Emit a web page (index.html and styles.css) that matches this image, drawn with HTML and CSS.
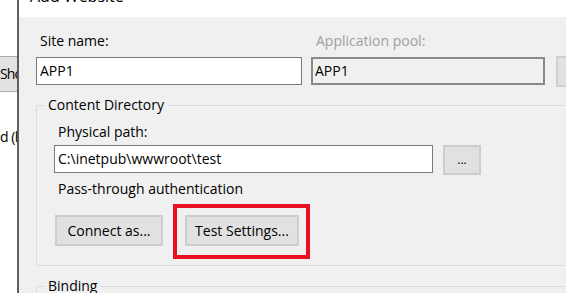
FILE: index.html
```html
<!DOCTYPE html>
<html lang="en">
<head>
<meta charset="utf-8">
<title>Add Website</title>
<link rel="stylesheet" href="styles.css">
</head>
<body>
<div class="screen">
  <div class="behind">
    <div class="behind-btn">Show</div>
    <div class="behind-text">d (http)</div>
  </div>
  <div class="dialog">
    <div class="titlebar"><span class="title">Add Website</span></div>
    <div class="body">
      <div class="top-row">
        <div class="field">
          <label class="label">Site name:</label>
          <div class="input">APP1</div>
        </div>
        <div class="field">
          <label class="label disabled">Application pool:</label>
          <div class="input readonly">APP1</div>
        </div>
        <div class="field">
          <span class="label">&nbsp;</span>
          <div class="btn side-btn">Select...</div>
        </div>
      </div>

      <fieldset class="group">
        <legend>Content Directory</legend>
        <div class="label inner-label">Physical path:</div>
        <div class="path-row">
          <div class="input path">C:\inetpub\wwwroot\test</div>
          <div class="btn browse">...</div>
        </div>
        <div class="label pass">Pass-through authentication</div>
        <div class="btn-row">
          <div class="btn connect">Connect as...</div>
          <div class="highlight">
            <div class="btn test">Test Settings...</div>
          </div>
        </div>
      </fieldset>

      <fieldset class="group binding">
        <legend>Binding</legend>
        <div class="spacer"></div>
      </fieldset>
    </div>
  </div>
</div>
</body>
</html>
```
FILE: styles.css
```css
* { box-sizing: border-box; }
html, body {
  margin: 0;
  padding: 0;
  width: 566px;
  height: 293px;
  overflow: hidden;
  background: #ffffff;
}
body {
  font-family: "Open Sans", "Noto Sans", sans-serif;
  font-size: 14px;
  line-height: 18px;
  color: #000000;
}
.screen {
  display: flex;
  align-items: flex-start;
  width: 640px;
  height: 293px;
  overflow: hidden;
}
.behind {
  width: 17px;
  flex: 0 0 17px;
  height: 293px;
  overflow: hidden;
  background: #ffffff;
  padding-top: 56px;
}
.behind-btn {
  width: 60px;
  height: 36px;
  margin-left: -18px;
  background: #e1e1e1;
  border: 1px solid #adadad;
  padding-left: 17px;
  line-height: 34px;
  white-space: nowrap;
  letter-spacing: -0.9px;
}
.behind-text {
  margin-top: 36px;
  white-space: nowrap;
  letter-spacing: -0.5px;
}
.dialog {
  flex: 0 0 auto;
  width: 620px;
  height: 293px;
  border-left: 2px solid #5f5f5f;
  background: #f0f0f0;
  display: flex;
  flex-direction: column;
}
.titlebar {
  flex: 0 0 17px;
  height: 17px;
  background: #ffffff;
  overflow: hidden;
  padding-left: 11px;
}
.title {
  display: block;
  font-size: 16px;
  line-height: 20px;
  margin-top: -14px;
  white-space: nowrap;
}
.body {
  flex: 0 0 auto;
  padding: 15px 0 0 17px;
}
.top-row {
  display: flex;
  gap: 9px;
}
.field {
  display: flex;
  flex-direction: column;
}
.label {
  display: block;
  padding-left: 4px;
  margin-bottom: 7px;
  white-space: nowrap;
}
.label.disabled { color: #a0a0a0; padding-left: 5px; }
.input {
  height: 28px;
  border: 1px solid #7a7a7a;
  background: #ffffff;
  padding: 0 3px;
  line-height: 26px;
  white-space: nowrap;
}
.top-row .field:nth-child(1) .input { width: 266px; }
.top-row .field:nth-child(2) .input {
  width: 234px;
  background: #f0f0f0;
  border: 2px solid #8a8a8a;
  padding: 0 2px;
  line-height: 24px;
}
.top-row .field:nth-child(3) { margin-left: 2px; }
.btn {
  background: #e1e1e1;
  border: 1px solid #adadad;
  text-align: center;
  white-space: nowrap;
}
.side-btn {
  height: 31px;
  width: 80px;
  margin-top: -1px;
  line-height: 27px;
  border-width: 2px;
  border-color: #cfcfcf;
}
.group {
  margin: 9px 0 0 0;
  border: 1px solid #dcdcdc;
  padding: 0 0 19px 17px;
  min-width: 0;
  width: 560px;
}
.group legend {
  padding: 0 4px;
  margin-left: -10px;
  line-height: 18px;
}
.inner-label {
  margin-top: 9px;
  margin-bottom: 4px;
  padding-left: 4px;
}
.path-row {
  display: flex;
  align-items: flex-start;
  gap: 10px;
}
.path-row .path { width: 379px; }
.browse {
  width: 38px;
  height: 30px;
  line-height: 26px;
  border-width: 2px;
  border-color: #cdcdcd;
  font-size: 12px;
}
.pass {
  margin-top: 5px;
  margin-bottom: 17px;
}
.btn-row {
  display: flex;
  gap: 22px;
  align-items: flex-start;
}
.btn-row .btn {
  height: 31px;
  line-height: 27px;
  border-width: 2px;
  border-color: #cdcdcd;
}
.connect { width: 108px; margin-left: 1px; }
.test { width: 114px; }
.highlight {
  position: relative;
}
.highlight::after {
  content: "";
  position: absolute;
  left: -12px;
  right: -11px;
  top: -11px;
  bottom: -13px;
  border: 4px solid #e81123;
  pointer-events: none;
}
.binding {
  margin-top: 11px;
}
.spacer { height: 20px; }
```
